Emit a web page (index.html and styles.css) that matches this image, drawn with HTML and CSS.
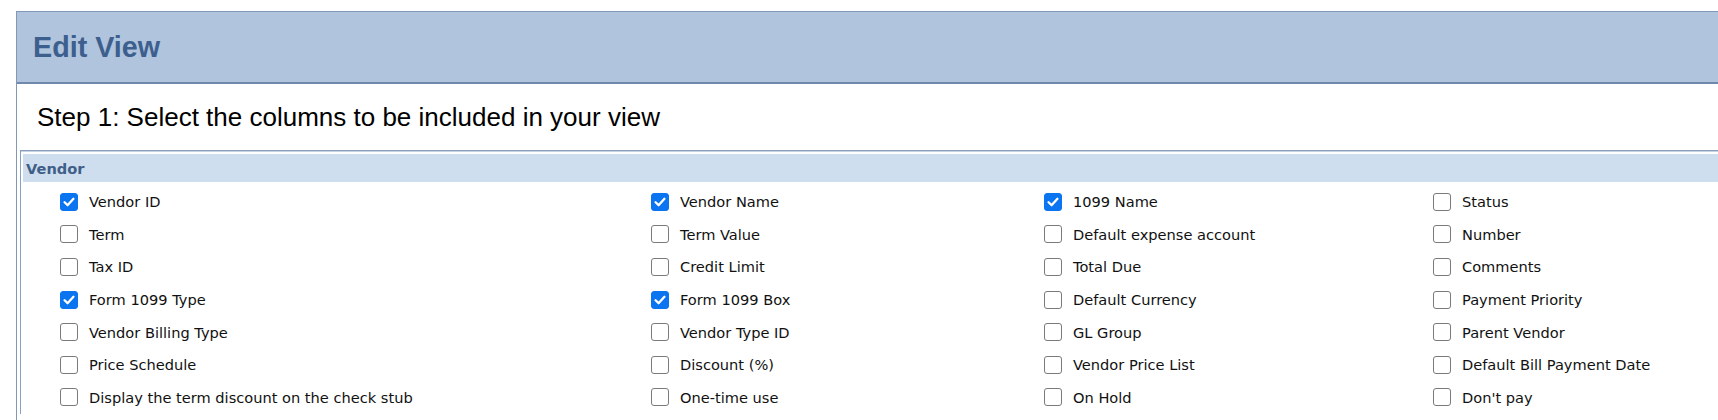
FILE: index.html
```html
<!DOCTYPE html>
<html>
<head>
<meta charset="utf-8">
<link rel="stylesheet" href="styles.css">
</head>
<body>
<div class="panel">
  <div class="panel-head"><h1 class="title">Edit View</h1></div>
  <div class="step">Step 1: Select the columns to be included in your view</div>
  <div class="section">
    <div class="section-head">Vendor</div>
    <div class="grid">
      <label class="opt"><input type="checkbox" class="cb" checked><span>Vendor ID</span></label>
      <label class="opt"><input type="checkbox" class="cb" checked><span>Vendor Name</span></label>
      <label class="opt"><input type="checkbox" class="cb" checked><span>1099 Name</span></label>
      <label class="opt"><input type="checkbox" class="cb"><span>Status</span></label>

      <label class="opt"><input type="checkbox" class="cb"><span>Term</span></label>
      <label class="opt"><input type="checkbox" class="cb"><span>Term Value</span></label>
      <label class="opt"><input type="checkbox" class="cb"><span>Default expense account</span></label>
      <label class="opt"><input type="checkbox" class="cb"><span>Number</span></label>

      <label class="opt"><input type="checkbox" class="cb"><span>Tax ID</span></label>
      <label class="opt"><input type="checkbox" class="cb"><span>Credit Limit</span></label>
      <label class="opt"><input type="checkbox" class="cb"><span>Total Due</span></label>
      <label class="opt"><input type="checkbox" class="cb"><span>Comments</span></label>

      <label class="opt"><input type="checkbox" class="cb" checked><span>Form 1099 Type</span></label>
      <label class="opt"><input type="checkbox" class="cb" checked><span>Form 1099 Box</span></label>
      <label class="opt"><input type="checkbox" class="cb"><span>Default Currency</span></label>
      <label class="opt"><input type="checkbox" class="cb"><span>Payment Priority</span></label>

      <label class="opt"><input type="checkbox" class="cb"><span>Vendor Billing Type</span></label>
      <label class="opt"><input type="checkbox" class="cb"><span>Vendor Type ID</span></label>
      <label class="opt"><input type="checkbox" class="cb"><span>GL Group</span></label>
      <label class="opt"><input type="checkbox" class="cb"><span>Parent Vendor</span></label>

      <label class="opt"><input type="checkbox" class="cb"><span>Price Schedule</span></label>
      <label class="opt"><input type="checkbox" class="cb"><span>Discount (%)</span></label>
      <label class="opt"><input type="checkbox" class="cb"><span>Vendor Price List</span></label>
      <label class="opt"><input type="checkbox" class="cb"><span>Default Bill Payment Date</span></label>

      <label class="opt"><input type="checkbox" class="cb"><span>Display the term discount on the check stub</span></label>
      <label class="opt"><input type="checkbox" class="cb"><span>One-time use</span></label>
      <label class="opt"><input type="checkbox" class="cb"><span>On Hold</span></label>
      <label class="opt"><input type="checkbox" class="cb"><span>Don't pay</span></label>
    </div>
  </div>
</div>
</body>
</html>
```
FILE: styles.css
```css
html, body {
  margin: 0;
  padding: 0;
  background: #ffffff;
  overflow: hidden;
}

body {
  font-family: "Liberation Sans", Arial, sans-serif;
}

.panel {
  margin: 11px 0 0 16px;
  width: 1780px;
  border: 1px solid #8298b6;
  border-right: none;
  border-bottom: none;
  min-height: 420px;
}

.panel-head {
  background: #b0c4de;
  border-bottom: 2px solid #7089aa;
  height: 70px;
  display: flex;
  align-items: center;
  padding-left: 16px;
  padding-top: 0;
}

.title {
  margin: 0;
  font-family: "Liberation Sans", Arial, sans-serif;
  font-weight: bold;
  font-size: 28.7px;
  color: #3d5f8d;
}

.step {
  height: 66px;
  display: flex;
  align-items: center;
  padding-left: 20px;
  font-size: 26px;
  color: #000;
}

.section {
  margin-left: 3px;
  border-top: 1px solid #8a9fbb;
  border-left: 1px solid #8a9fbb;
  box-shadow: inset 0 1px 0 #c5d2e3;
  padding: 2px 0 0 2px;
}

.section-head {
  margin-top: 1px;
  background: #cedeee;
  height: 28px;
  display: flex;
  align-items: center;
  padding-left: 3px;
  font-family: "DejaVu Sans", Verdana, sans-serif;
  font-weight: bold;
  font-size: 14.6px;
  color: #3f5f88;
}

.grid {
  display: grid;
  grid-template-columns: 591px 393px 389px 1fr;
  grid-auto-rows: 32.6px;
  padding-top: 3.5px;
}

.opt {
  display: flex;
  align-items: center;
  padding-left: 37px;
  font-family: "DejaVu Sans", Verdana, sans-serif;
  font-size: 14.6px;
  color: #111;
  white-space: nowrap;
}

.cb {
  appearance: none;
  -webkit-appearance: none;
  margin: 0 11px 0 0;
  width: 18px;
  height: 18px;
  border: 1.5px solid #7a7a7a;
  border-radius: 3px;
  background: #ffffff;
  flex: none;
}

.cb:checked {
  border-color: #0b74f0;
  background-color: #0b74f0;
  background-image: url("data:image/svg+xml,%3Csvg xmlns='http://www.w3.org/2000/svg' viewBox='0 0 18 18'%3E%3Cpath d='M4 9.3 L7.4 12.6 L14 5.4' fill='none' stroke='white' stroke-width='2.6' stroke-linecap='round' stroke-linejoin='round'/%3E%3C/svg%3E");
  background-size: 100% 100%;
  background-repeat: no-repeat;
  background-position: center;
}
```
